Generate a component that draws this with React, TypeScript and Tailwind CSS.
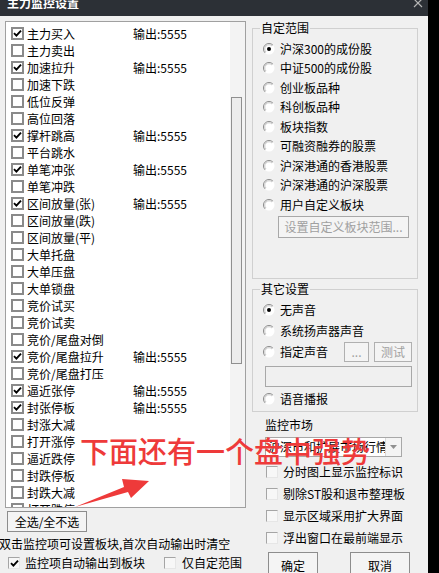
import React from "react";

const FONT = { fontFamily: '"Noto Sans CJK SC", "Noto Sans", sans-serif' };

interface MonitorItem {
  label: string;
  checked?: boolean;
}

const items: MonitorItem[] = [
  { label: "主力买入", checked: true },
  { label: "主力卖出" },
  { label: "加速拉升", checked: true },
  { label: "加速下跌" },
  { label: "低位反弹" },
  { label: "高位回落" },
  { label: "撑杆跳高", checked: true },
  { label: "平台跳水" },
  { label: "单笔冲张", checked: true },
  { label: "单笔冲跌" },
  { label: "区间放量(张)", checked: true },
  { label: "区间放量(跌)" },
  { label: "区间放量(平)" },
  { label: "大单托盘" },
  { label: "大单压盘" },
  { label: "大单锁盘" },
  { label: "竞价试买" },
  { label: "竞价试卖" },
  { label: "竞价/尾盘对倒" },
  { label: "竞价/尾盘拉升", checked: true },
  { label: "竞价/尾盘打压" },
  { label: "逼近张停", checked: true },
  { label: "封张停板", checked: true },
  { label: "封涨大减" },
  { label: "打开涨停" },
  { label: "逼近跌停" },
  { label: "封跌停板" },
  { label: "封跌大减" },
  { label: "打开跌停" },
];

const ranges = [
  "沪深300的成份股",
  "中证500的成份股",
  "创业板品种",
  "科创板品种",
  "板块指数",
  "可融资融券的股票",
  "沪深港通的香港股票",
  "沪深港通的沪深股票",
  "用户自定义板块",
];

const options = [
  "分时图上显示监控标识",
  "剔除ST股和退市整理板",
  "显示区域采用扩大界面",
  "浮出窗口在最前端显示",
];

function Tick() {
  return (
    <svg width="9" height="9" viewBox="0 0 9 9">
      <path d="M1 4.2 L3.4 6.6 L8 1.6" fill="none" stroke="#000" strokeWidth="1.9" />
    </svg>
  );
}

function CheckBox({ checked }: { checked?: boolean }) {
  return (
    <span className="flex h-[13px] w-[13px] shrink-0 items-center justify-center border-2 border-[#8a8a8a] bg-white">
      {checked && <Tick />}
    </span>
  );
}

function FlatCheck({ checked }: { checked?: boolean }) {
  return (
    <span className="flex h-[12px] w-[12px] shrink-0 items-center justify-center border border-[#a5a5a5] border-b-[#e6e6e6] border-r-[#e6e6e6] bg-[#f7f7f7]">
      {checked && <Tick />}
    </span>
  );
}

function Radio({ on }: { on?: boolean }) {
  return (
    <svg width="12" height="12" viewBox="0 0 12 12" className="shrink-0">
      <circle cx="6" cy="6" r="5.5" fill="#fff" />
      <path d="M2.1 9.9 A5.5 5.5 0 0 1 9.9 2.1" fill="none" stroke="#8a8a8a" strokeWidth="1" />
      <path d="M3 9 A4.2 4.2 0 0 1 9 3" fill="none" stroke="#c8c8c8" strokeWidth="1" />
      {on && <circle cx="6" cy="6" r="2" fill="#000" />}
    </svg>
  );
}

function Btn({
  children,
  className,
  disabled,
}: {
  children: React.ReactNode;
  className: string;
  disabled?: boolean;
}) {
  return (
    <div
      className={`flex items-center justify-center border border-[#8d8d8d] bg-[#f4f4f4] text-[12px] ${
        disabled ? "text-[#a0a0a0]" : "text-black"
      } ${className}`}
    >
      {children}
    </div>
  );
}

function ListRow({ item }: { item: MonitorItem }) {
  return (
    <div className="flex h-[17px] shrink-0 items-center">
      <CheckBox checked={item.checked} />
      <span className="ml-[3px] w-[106px] whitespace-nowrap">{item.label}</span>
      {item.checked && <span className="whitespace-nowrap">输出:5555</span>}
    </div>
  );
}

export default function App() {
  return (
    <div
      className="relative flex h-[573px] w-[439px] overflow-hidden bg-black text-[12px] leading-none text-black"
      style={FONT}
    >
      <div className="flex h-[573px] w-[428px] flex-col bg-[#f0f0f0]">
        {/* title bar */}
        <div className="relative h-[16px] shrink-0 overflow-hidden bg-[#2c3036]">
          <span className="absolute left-[7px] top-[-4px] text-[12px] font-bold leading-[14px] text-white">
            主力监控设置
          </span>
          <svg className="absolute left-[413px] top-[-1px]" width="10" height="9" viewBox="0 0 10 9">
            <path d="M1 0 L9 8 M9 0 L1 8" stroke="#b4b4b4" strokeWidth="1.2" />
          </svg>
        </div>

        <div className="flex flex-1 pl-[5px] pt-[5px]">
          {/* left column */}
          <div className="flex w-[241px] shrink-0 flex-col">
            <div className="flex h-[487px] border border-[#a0a0a0] bg-white">
              <div className="flex flex-1 flex-col overflow-hidden pl-[5px] pt-[3px]">
                {items.map((item) => (
                  <ListRow key={item.label} item={item} />
                ))}
              </div>
              <div className="w-[15px] shrink-0 bg-[#f3f3f3] pl-[1px] pt-[75px]">
                <div className="h-[267px] w-[11px] border border-[#8f8f8f] bg-[#ececec]" />
              </div>
            </div>
            <Btn className="ml-[2px] mt-[3px] h-[21px] w-[80px]">全选/全不选</Btn>
            <div className="-ml-[6px] mt-[4px] h-[16px] whitespace-nowrap leading-[16px]">
              双击监控项可设置板块,首次自动输出时清空
            </div>
            <div className="mt-[3px] flex h-[16px] items-center pl-[3px]">
              <FlatCheck checked />
              <span className="ml-[5px]">监控项自动输出到板块</span>
              <span className="ml-[19px]">
                <FlatCheck />
              </span>
              <span className="ml-[6px]">仅自定范围</span>
            </div>
          </div>

          {/* right column */}
          <div className="ml-[6px] flex w-[166px] shrink-0 flex-col">
            <fieldset className="h-[258px] border border-[#d0d0d0] pl-[10px]">
              <legend className="ml-[-3px] px-[1px] leading-[14px]">自定范围</legend>
              <div className="flex flex-col pt-[4px]">
                {ranges.map((r, i) => (
                  <div key={r} className="flex h-[19.5px] items-center">
                    <Radio on={i === 0} />
                    <span className="ml-[5px] whitespace-nowrap">{r}</span>
                  </div>
                ))}
                <Btn disabled className="ml-[15px] mt-[1px] h-[22px] w-[131px] border-[#a8a8a8]">
                  设置自定义板块范围...
                </Btn>
              </div>
            </fieldset>

            <fieldset className="mt-[3px] h-[130px] border border-[#d0d0d0] pl-[10px] pr-[5px]">
              <legend className="ml-[-3px] px-[1px] leading-[14px]">其它设置</legend>
              <div className="flex flex-col pt-[4px]">
                <div className="flex h-[20px] items-center">
                  <Radio on />
                  <span className="ml-[5px]">无声音</span>
                </div>
                <div className="flex h-[21px] items-center">
                  <Radio />
                  <span className="ml-[5px]">系统扬声器声音</span>
                </div>
                <div className="flex h-[22px] items-center">
                  <Radio />
                  <span className="ml-[5px]">指定声音</span>
                  <Btn disabled className="ml-auto h-[20px] w-[25px] border-[#b0b0b0]">
                    ...
                  </Btn>
                  <Btn disabled className="ml-[5px] h-[20px] w-[38px] border-[#b0b0b0]">
                    测试
                  </Btn>
                </div>
                <div className="ml-[2px] mt-[3px] h-[21px] w-[147px] border border-[#a8a8a8] bg-[#f0f0f0]" />
                <div className="mt-[2px] flex h-[20px] items-center">
                  <Radio />
                  <span className="ml-[5px]">语音播报</span>
                </div>
              </div>
            </fieldset>

            <div className="ml-[13px] mt-[5px] h-[16px] leading-[16px]">监控市场</div>
            <div className="ml-[13px] mt-[4px] flex h-[20px] w-[137px] items-center border border-[#a8a8a8] bg-white">
              <span className="w-[119px] overflow-hidden whitespace-nowrap pl-[2px]">沪深市和扩展市场行情</span>
              <span className="flex h-full flex-1 items-center justify-center border-l border-[#d8d8d8] bg-[#f4f4f4]">
                <svg width="7" height="4" viewBox="0 0 7 4">
                  <path d="M0 0 H7 L3.5 4 Z" fill="#909090" />
                </svg>
              </span>
            </div>
            <div className="mt-[4px] flex flex-col">
              {options.map((o) => (
                <div key={o} className="ml-[14px] flex h-[22px] items-center">
                  <FlatCheck />
                  <span className="ml-[5px] whitespace-nowrap">{o}</span>
                </div>
              ))}
            </div>
            <div className="mt-[3px] flex">
              <Btn className="ml-[16px] h-[28px] w-[50px]">确定</Btn>
              <Btn className="ml-[32px] h-[28px] w-[60px]">取消</Btn>
            </div>
          </div>
        </div>
      </div>

      {/* annotation overlay */}
      <div className="absolute left-[80px] top-[435px] whitespace-nowrap text-[29px] font-medium leading-[31px] text-[#ee3a3a]">
        下面还有一个盘中强势
      </div>
      <svg className="absolute left-0 top-0" width="439" height="573" viewBox="0 0 439 573">
        <polygon
          points="75,507 124,487 122,479 149,481 131,498 128,492"
          fill="#ee3a3a"
        />
      </svg>
    </div>
  );
}
